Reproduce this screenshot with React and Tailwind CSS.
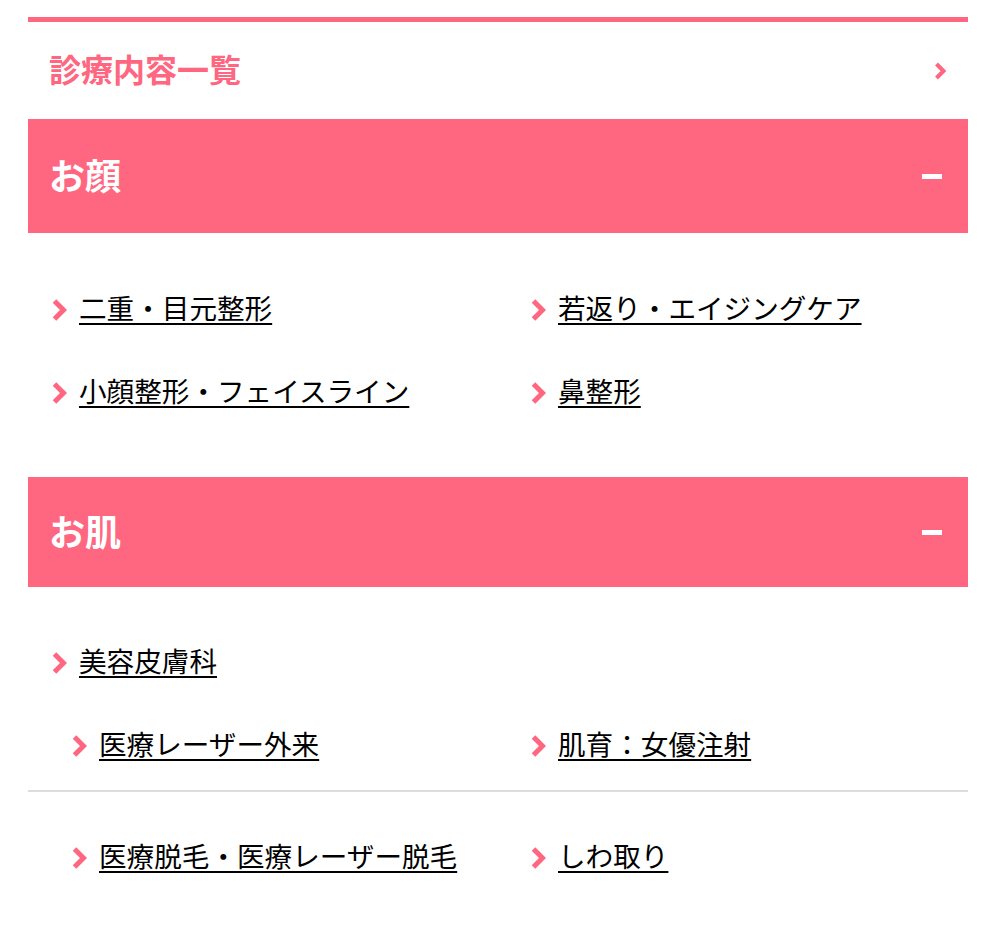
import React from "react";

const PINK = "#ff6680";

function Chevron({ className = "" }) {
  return (
    <svg width="15" height="24" viewBox="0 0 15 24" className={className + " shrink-0"}>
      <polyline points="2.5,3 11.5,12 2.5,21" fill="none" stroke={PINK} strokeWidth="5" strokeLinejoin="miter" />
    </svg>
  );
}

function Item({ label, sub = false }) {
  return (
    <div className={"flex h-[83px] items-center gap-[12px] " + (sub ? "pl-[20px]" : "")}>
      <Chevron />
      <a href="#" className="pb-[4px] text-[27.6px] leading-none text-black underline decoration-2 underline-offset-[4px]">
        {label}
      </a>
    </div>
  );
}

function Header({ title, h }) {
  return (
    <div className={"flex items-center justify-between bg-[#ff6680] pl-[21px] pr-[26px] " + h}>
      <span className="pb-[4px] text-[36px] font-bold leading-none text-white">{title}</span>
      <span className="block h-[5px] w-[20px] bg-white" />
    </div>
  );
}

export default function App() {
  return (
    <div
      className="min-h-[926px] bg-white px-[28px] pt-[17px]"
      style={{ fontFamily: '"Noto Sans CJK JP", "Noto Sans", sans-serif' }}
    >
      <div className="border-t-[5px] border-[#ff6680]">
        <div className="flex h-[97px] items-center justify-between pl-[21px] pr-[21px]">
          <span className="pb-[5px] text-[32px] font-bold leading-none text-[#ff6680]">診療内容一覧</span>
          <svg width="13" height="20" viewBox="0 0 13 20">
            <polyline points="2.5,3 9.5,10 2.5,17" fill="none" stroke={PINK} strokeWidth="4" />
          </svg>
        </div>

        <Header title="お顔" h="h-[114px]" />
        <div className="grid grid-cols-[479px_1fr] pl-[24px] pt-[35px] pb-[43px]">
          <Item label="二重・目元整形" />
          <Item label="若返り・エイジングケア" />
          <Item label="小顔整形・フェイスライン" />
          <Item label="鼻整形" />
        </div>

        <Header title="お肌" h="h-[110px]" />
        <div className="pt-[34px]">
          <div className="pl-[24px]">
            <Item label="美容皮膚科" />
            <div className="grid grid-cols-[479px_1fr]">
              <Item label="医療レーザー外来" sub />
              <Item label="肌育：女優注射" />
            </div>
          </div>
          <div className="mt-[3px] h-[2px] bg-[#dddddd]" />
          <div className="grid grid-cols-[479px_1fr] pl-[24px] pt-[24px]">
            <Item label="医療脱毛・医療レーザー脱毛" sub />
            <Item label="しわ取り" />
          </div>
        </div>
      </div>
    </div>
  );
}
